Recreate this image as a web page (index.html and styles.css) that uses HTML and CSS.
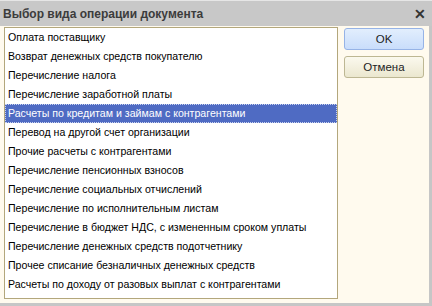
FILE: index.html
```html
<html lang="ru">
<head>
    <meta charset="UTF-8">
    <title>Выбор вида операции документа</title>
    <link rel="stylesheet" href="styles.css">
</head>
<body>
    <div class="window">
        <div class="titlebar">
            <span class="title">Выбор вида операции документа</span>
            <span class="close">&#x2715;</span>
        </div>
        <div class="content">
            <ul class="list">
                <li>Оплата поставщику</li>
                <li>Возврат денежных средств покупателю</li>
                <li>Перечисление налога</li>
                <li>Перечисление заработной платы</li>
                <li class="selected">Расчеты по кредитам и займам с контрагентами</li>
                <li>Перевод на другой счет организации</li>
                <li>Прочие расчеты с контрагентами</li>
                <li>Перечисление пенсионных взносов</li>
                <li>Перечисление социальных отчислений</li>
                <li>Перечисление по исполнительным листам</li>
                <li>Перечисление в бюджет НДС, с измененным сроком уплаты</li>
                <li>Перечисление денежных средств подотчетнику</li>
                <li>Прочее списание безналичных денежных средств</li>
                <li>Расчеты по доходу от разовых выплат с контрагентами</li>
            </ul>
            <div class="buttons">
                <button class="button ok">OK</button>
                <button class="button cancel">Отмена</button>
            </div>
        </div>
    </div>
</body>
</html>
```

FILE: styles.css
```css
body {
    margin: 0;
    font-family: "Liberation Sans", Arial, sans-serif;
    font-size: 10.6px;
    color: #000;
}
.window {
    width: 432px;
    height: 306px;
    box-sizing: border-box;
    background: #fffaee;
    border-right: 3px solid #c6c6c6;
    border-bottom: 3px solid #c6c6c6;
    display: flex;
    flex-direction: column;
}
.titlebar {
    height: 26px;
    box-sizing: border-box;
    border-top: 1px solid #e6e6e6;
    background: #c8c8c8;
    display: flex;
    align-items: center;
    justify-content: space-between;
    padding: 0 6px 0 3px;
    margin-right: -3px;
}
.title {
    font-weight: bold;
    font-size: 12px;
    color: #3c3c3c;
}
.close {
    font-weight: bold;
    font-size: 14px;
    color: #333;
}
.content {
    display: flex;
    gap: 6px;
    padding: 1px 0 0 4px;
}
.list {
    list-style: none;
    margin: 0;
    padding: 0;
    width: 334px;
    height: 272px;
    box-sizing: border-box;
    background: #fff;
    border: 1px solid #b3a77c;
}
.list li {
    height: 19px;
    line-height: 19px;
    padding-left: 3px;
    white-space: nowrap;
}
.list .selected {
    background: #4f6bc3;
    color: #fff;
    outline: 1px dotted #c9d2ee;
    outline-offset: -1px;
}
.buttons {
    display: flex;
    flex-direction: column;
    gap: 6px;
    padding-top: 1px;
}
.button {
    width: 80px;
    height: 22px;
    border-radius: 3px;
    font-family: "Liberation Sans", Arial, sans-serif;
    font-size: 11.5px;
    color: #222;
    padding: 0;
}
.ok {
    background: linear-gradient(#e2eefd, #c9ddfb);
    border: 1px solid #96b3e6;
}
.cancel {
    background: linear-gradient(#fbf9ee, #ebe7cf);
    border: 1px solid #bdb793;
}
```
